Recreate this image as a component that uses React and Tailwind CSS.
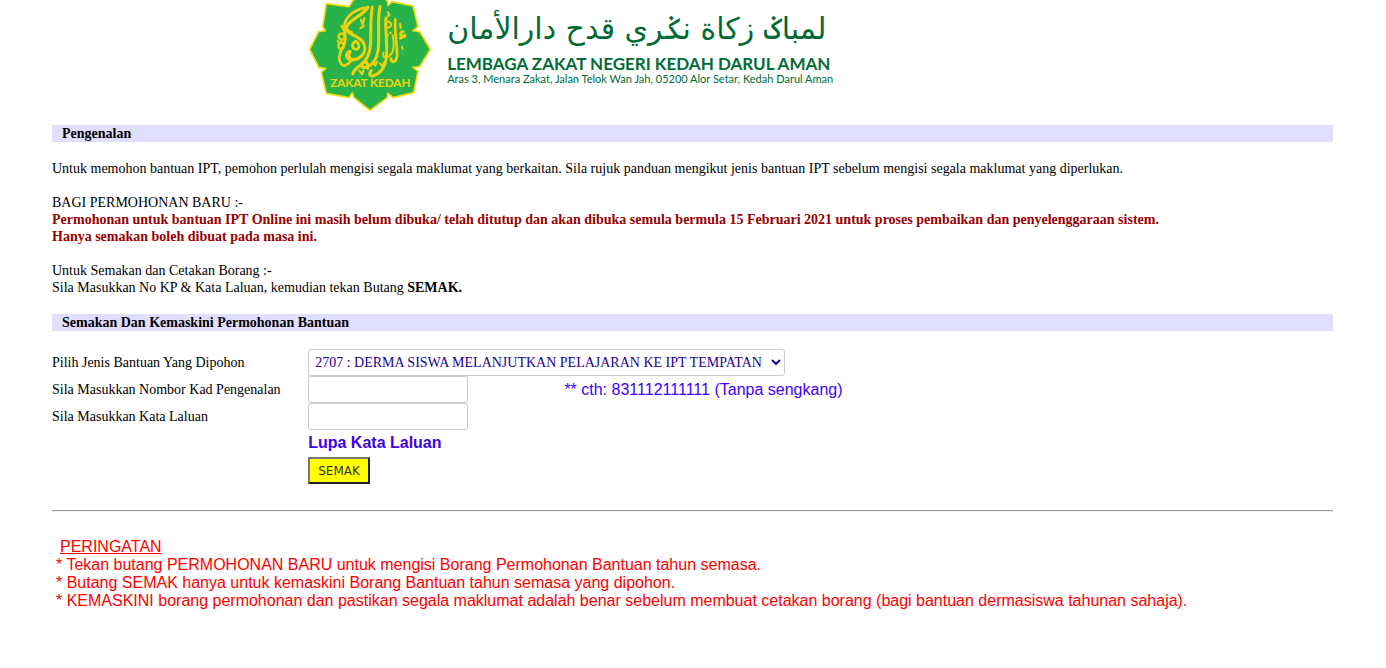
import React from 'react';

function Emblem() {
  return (
    <svg viewBox="24 0 372 336" className="h-28 w-31 shrink-0" role="img" aria-label="Zakat Kedah">
      <path
        d="M210 -32L262 2L264 16L276 5L339 18L354 80L339 92L359 95L391 148L359 200L339 202L354 213L341 278L279 293L264 279L262 293L210 331L162 293L157 279L147 293L79 280L64 217L77 205L57 203L29 148L56 95L76 92L68 80L79 11L147 20L155 8L158 2Z"
        fill="#27b24a" stroke="#f5dc0a" strokeWidth="5" strokeLinejoin="round"
      />
      <g fill="none" stroke="#f0d20c" strokeLinecap="round" strokeLinejoin="round" transform="translate(0 -2) scale(1 1.08)">
        <path strokeWidth="9" d="M204 22C186 48 150 54 140 76C132 98 174 96 190 120C203 143 187 164 160 168C139 170 134 154 147 145" />
        <path strokeWidth="8" d="M202 23C176 24 146 40 136 62C130 78 140 88 154 91" />
        <path strokeWidth="9" d="M217 22C211 48 213 84 212 118C211 148 204 169 181 183C169 191 162 198 158 207" />
        <path strokeWidth="9" d="M240 20C233 48 237 82 236 119C236 148 230 170 211 183C193 194 180 190 188 178C196 169 207 178 203 191" />
        <path strokeWidth="9" d="M258 52C255 76 261 107 260 151C259 183 244 204 224 211C209 216 205 207 214 198" />
        <path strokeWidth="8" d="M125 74C139 90 140 116 128 134C116 153 113 167 124 180C132 189 146 181 153 170" />
        <path strokeWidth="7" d="M130 96C117 91 111 105 121 111C133 116 137 102 130 96M126 120C114 119 111 132 120 137C130 141 137 128 126 120" />
        <path strokeWidth="8" d="M169 117C156 119 153 134 165 138C176 142 183 129 169 117M151 145C143 158 149 169 163 166" />
        <path strokeWidth="6" d="M267 62C255 61 253 74 262 78C274 80 278 67 267 62M278 100C284 126 281 148 268 158C256 166 246 159 251 148" />
        <path strokeWidth="8" d="M286 56C282 84 293 130 291 159C287 176 274 178 273 165M310 90C299 91 299 101 309 103L315 99M301 108L314 103" />
        <path strokeWidth="6" d="M183 57L188 70L193 52M181 80L191 74M264 36L268 42L264 47M300 68L302 80M178 198L186 208L190 198M218 176L226 184L231 173M113 116L117 119M240 178L247 186L252 175M270 92L272 94M262 98L264 100M306 132L308 138" />
      </g>
      <text x="211" y="262" textAnchor="middle" fontSize="35" className="fill-[#f0d20c] font-['Lato',sans-serif] font-bold">ZAKAT KEDAH</text>
    </svg>
  );
}

function SectionTitle({ children }) {
  return <h2 className="bg-[#e2deff] px-2.5 font-bold">{children}</h2>;
}

const fieldClass = 'h-[27px] rounded-[3px] border border-[#cccccc] bg-white text-[#240090]';

export default function App() {
  return (
    <main className="pr-[53px] pl-[52px] pb-14 font-['Liberation_Serif',serif] text-sm/[17px] text-black">
      <header className="ml-[20%] flex gap-[15px] pb-[13px]">
        <Emblem />
        <div className="pt-1 text-[#006b35]">
          <p lang="ms-Arab" dir="rtl" className="text-left font-['DejaVu_Sans',sans-serif] text-[30px]/[50px] whitespace-nowrap">لمباݢ زكاة نݢري قدح دارالأمان</p>
          <p className="font-['Lato',sans-serif] text-[17px]/[19px] font-bold whitespace-nowrap">LEMBAGA ZAKAT NEGERI KEDAH DARUL AMAN</p>
          <p className="font-['Lato',sans-serif] text-[11px]/[12px] whitespace-nowrap">Aras 3, Menara Zakat, Jalan Telok Wan Jah, 05200 Alor Setar, Kedah Darul Aman</p>
        </div>
      </header>

      <SectionTitle>Pengenalan</SectionTitle>
      <div className="flex flex-col gap-[17px] py-[18px]">
        <p>Untuk memohon bantuan IPT, pemohon perlulah mengisi segala maklumat yang berkaitan. Sila rujuk panduan mengikut jenis bantuan IPT sebelum mengisi segala maklumat yang diperlukan.</p>
        <div>
          <p>BAGI PERMOHONAN BARU :-</p>
          <p className="font-bold text-[#990000]">
            Permohonan untuk bantuan IPT Online ini masih belum dibuka/ telah ditutup dan akan dibuka semula bermula 15 Februari 2021 untuk proses pembaikan dan penyelenggaraan sistem.
            <br />
            Hanya semakan boleh dibuat pada masa ini.
          </p>
        </div>
        <div>
          <p>Untuk Semakan dan Cetakan Borang :-</p>
          <p>Sila Masukkan No KP &amp; Kata Laluan, kemudian tekan Butang <strong>SEMAK.</strong></p>
        </div>
      </div>

      <SectionTitle>Semakan Dan Kemaskini Permohonan Bantuan</SectionTitle>
      <form className="grid grid-cols-[20%_20%_1fr] items-center py-[18px]" onSubmit={(e) => e.preventDefault()}>
        <label htmlFor="jenis">Pilih Jenis Bantuan Yang Dipohon</label>
        <div className="col-span-2 flex items-center">
          <div className="relative">
            <select id="jenis" className={`${fieldClass} block appearance-none pr-5 pl-1.5`}>
              <option>2707 : DERMA SISWA MELANJUTKAN PELAJARAN KE IPT TEMPATAN</option>
            </select>
            <svg viewBox="0 0 10 7" className="pointer-events-none absolute top-2.5 right-1 h-[7px] w-2.5" fill="none" stroke="#240090" strokeWidth="2" strokeLinecap="round" strokeLinejoin="round" aria-hidden="true">
              <path d="M1.5 1.5L5 5L8.5 1.5" />
            </svg>
          </div>
        </div>
        <label htmlFor="kp">Sila Masukkan Nombor Kad Pengenalan</label>
        <input id="kp" type="text" className={`${fieldClass} w-40 px-1.5`} />
        <p className="font-['Liberation_Sans',sans-serif] text-base/[18px] text-[#4000ff]">** cth: 831112111111 (Tanpa sengkang)</p>
        <label htmlFor="kata">Sila Masukkan Kata Laluan</label>
        <input id="kata" type="password" className={`${fieldClass} w-40 px-1.5`} />
        <div className="col-span-2 col-start-2 flex flex-col items-start gap-[5px] pt-1">
          <a href="#lupa" className="font-['Liberation_Sans',sans-serif] text-base/[18px] font-bold text-[#4000e6]">Lupa Kata Laluan</a>
          <button type="submit" className="h-[27px] border-2 border-t-[#767676] border-r-[#222222] border-b-[#222222] border-l-[#767676] bg-[#ffff00] px-2 font-['DejaVu_Sans',sans-serif] text-xs text-[#333333]">SEMAK</button>
        </div>
      </form>

      <hr className="mt-2 border-t border-b border-t-[#999999] border-b-[#eeeeee]" />
      <section className="px-1 pt-[26px] font-['Liberation_Sans',sans-serif] text-base/[18px] text-[#ff0000]">
        <h2 className="px-1 underline">PERINGATAN</h2>
        <ul>
          <li>* Tekan butang PERMOHONAN BARU untuk mengisi Borang Permohonan Bantuan tahun semasa.</li>
          <li>* Butang SEMAK hanya untuk kemaskini Borang Bantuan tahun semasa yang dipohon.</li>
          <li>* KEMASKINI borang permohonan dan pastikan segala maklumat adalah benar sebelum membuat cetakan borang (bagi bantuan dermasiswa tahunan sahaja).</li>
        </ul>
      </section>
    </main>
  );
}
